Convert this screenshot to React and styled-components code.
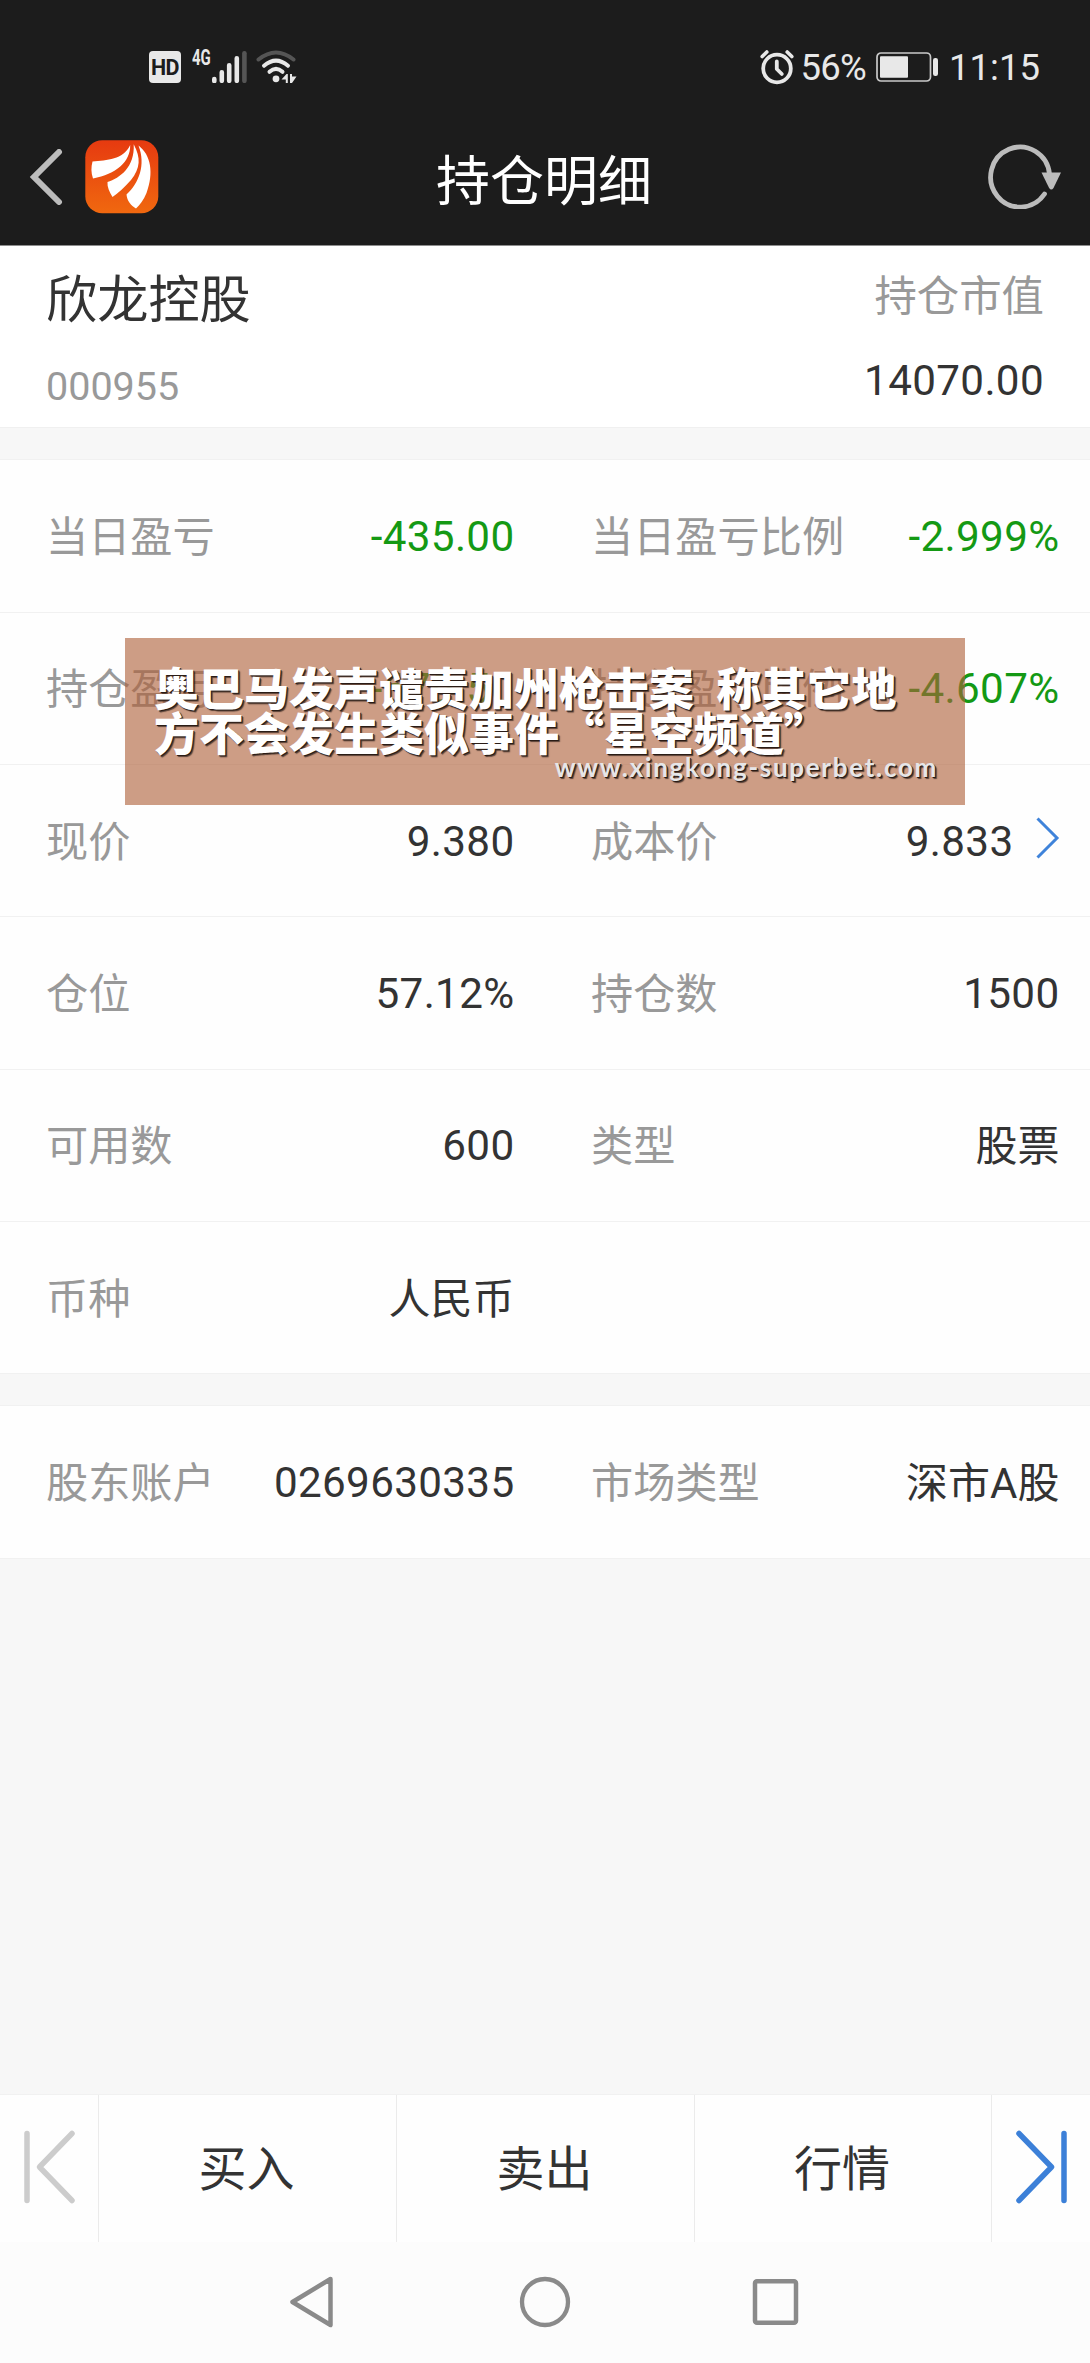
import React from "react";
import styled, { createGlobalStyle } from "styled-components";

const Global = createGlobalStyle`
  * { box-sizing: border-box; }
  body {
    margin: 0;
    background: #f7f7f7;
    font-family: Roboto, "Noto Sans CJK SC", sans-serif;
    font-weight: 400;
    color: #333;
  }
  svg { display: block; flex: none; }
`;

const Screen = styled.div`
  position: relative;
  width: 1090px;
  height: 2363px;
  display: flex;
  flex-direction: column;
  overflow: hidden;
  background: #f7f7f7;
`;

const Top = styled.header`
  height: 246px;
  background: #1c1c1c;
  border-bottom: 1px solid #8d8d8d;
  flex: none;
`;

const StatusBar = styled.div`
  height: 108px;
  padding: 26px 50px 0 149px;
  display: flex;
  align-items: center;
  justify-content: space-between;
`;

const StatusGroup = styled.div`
  display: flex;
  align-items: center;
  height: 82px;
`;

const HdBadge = styled.span`
  width: 32px;
  height: 32px;
  border-radius: 4px;
  background: #e8e8e8;
  color: #1c1c1c;
  font-size: 21.5px;
  font-weight: 700;
  line-height: 33px;
  text-align: center;
  letter-spacing: -0.5px;
`;

const NetType = styled.span`
  width: 20px;
  margin: 0 0 19px 11px;
  color: #e8e8e8;
  font-size: 22px;
  font-weight: 700;
  line-height: 16px;
  white-space: nowrap;
  transform: scaleX(0.68);
  transform-origin: left;
`;

const StatusText = styled.span`
  color: #e8e8e8;
  font-size: 36.5px;
  line-height: 40px;
  letter-spacing: ${(p) => p.$spacing || "0"};
  margin: 2px 0 0 ${(p) => p.$left};
`;

const StatusIcon = styled.span`
  margin-left: ${(p) => p.$left || "0"};
`;

const TitleBar = styled.div`
  height: 137px;
  display: grid;
  grid-template-columns: 200px 1fr 200px;
  align-items: center;
`;

const TitleLeft = styled.div`
  display: flex;
  align-items: center;
  gap: 22px;
  padding-left: 29px;
`;

const TitleRight = styled.div`
  display: flex;
  justify-content: flex-end;
  padding: 0 27px 4px 0;
`;

const Title = styled.h1`
  margin: 12px 0 0;
  padding-right: 2px;
  color: #fff;
  font-size: 54px;
  font-weight: 400;
  line-height: 70px;
  text-align: center;
`;

const Summary = styled.section`
  height: 182px;
  flex: none;
  display: flex;
  justify-content: space-between;
  padding: 20px 46px 0 46px;
  background: #fff;
  border-bottom: 1px solid #f0f0f0;
`;

const SummaryColumn = styled.div`
  display: flex;
  flex-direction: column;
  align-items: ${(p) => (p.$end ? "flex-end" : "flex-start")};
`;

const StockName = styled.div`
  font-size: 51.2px;
  line-height: 70px;
`;

const StockCode = styled.div`
  margin-top: 31px;
  color: #999;
  font-size: 39.5px;
  line-height: 40px;
`;

const MarketLabel = styled.div`
  color: #999;
  font-size: 42.4px;
  line-height: 62px;
`;

const MarketValue = styled.div`
  margin-top: 33px;
  font-size: 42.2px;
  line-height: 40px;
  letter-spacing: 0.35px;
`;

const Group = styled.section`
  flex: none;
  margin-top: ${(p) => p.$gap};
  background: #fefefe;
  border-top: 1px solid #f1f1f1;
  border-bottom: 1px solid #f1f1f1;
`;

const Row = styled.div`
  display: grid;
  grid-template-columns: 1fr 1fr;
  height: ${(p) => (p.$first ? "151.5px" : "152.4px")};
  border-top: ${(p) => (p.$first ? "0" : "1px solid #f1f1f1")};
`;

const Cell = styled.div`
  display: flex;
  align-items: center;
  padding: 2px 30.5px 0 46px;
`;

const Label = styled.span`
  flex: 1;
  padding-top: 2px;
  color: #999;
  font-size: 42.2px;
  line-height: 60px;
  white-space: nowrap;
`;

const Value = styled.span`
  padding-top: ${(p) => (p.$cjk ? "2px" : "0")};
  color: ${(p) => (p.$loss ? "#149914" : "#333")};
  font-size: ${(p) => (p.$cjk ? "42px" : "42.2px")};
  line-height: 60px;
  letter-spacing: ${(p) => (p.$cjk ? "0" : "0.35px")};
  white-space: nowrap;
`;

const RowArrow = styled.svg`
  margin: -8px 0 0 22px;
`;

const Banner = styled.aside`
  position: absolute;
  left: 125px;
  top: 638px;
  width: 840px;
  height: 167px;
  padding: 26px 27px 0 29px;
  background: rgba(174, 97, 58, 0.62);
`;

const BannerHeadline = styled.div`
  color: #fff;
  font-family: "Noto Sans CJK SC", sans-serif;
  font-size: 45px;
  font-weight: 900;
  line-height: 45px;
  white-space: pre;
  text-shadow: 1px 1px 0 #2a1c16, 2px 2px 1px rgba(40, 25, 20, 0.7);
`;

const BannerGap = styled.span`
  display: inline-block;
  width: 22.5px;
`;

const BannerUrl = styled.div`
  margin-top: -2px;
  color: #e6e6e8;
  font-family: Lato, sans-serif;
  font-size: 26px;
  font-weight: 700;
  line-height: 30px;
  letter-spacing: 1.7px;
  text-align: right;
  text-shadow: 1px 1px 0 #2a1c16, 2px 2px 1px rgba(40, 25, 20, 0.7);
`;

const Spacer = styled.div`
  flex: 1;
`;

const ActionBar = styled.nav`
  flex: none;
  height: 148px;
  display: grid;
  grid-template-columns: 98px 298px 298px 297px 99px;
  background: #fefefe;
  border-top: 1px solid #f1f1f1;
`;

const Action = styled.div`
  display: flex;
  align-items: center;
  justify-content: center;
  padding: ${(p) => (p.$icon ? "0 0 3px" : "2px 2px 0 0")};
  border-left: ${(p) => (p.$first ? "0" : "1px solid #ebebeb")};
  font-size: 48px;
  line-height: 60px;
`;

const SystemNav = styled.footer`
  flex: none;
  height: 121px;
  display: grid;
  grid-template-columns: 288px 231px 232px 1fr;
  align-items: center;
  padding-bottom: 2px;
  background: #fcfcfc;
`;

const groups = [
  {
    gap: "31px",
    rows: [
      [
        { label: "当日盈亏", value: "-435.00", loss: true },
        { label: "当日盈亏比例", value: "-2.999%", loss: true },
      ],
      [
        { label: "持仓盈亏", value: "-679.50", loss: true },
        { label: "持仓盈亏比例", value: "-4.607%", loss: true },
      ],
      [
        { label: "现价", value: "9.380" },
        { label: "成本价", value: "9.833", arrow: true },
      ],
      [
        { label: "仓位", value: "57.12%" },
        { label: "持仓数", value: "1500" },
      ],
      [
        { label: "可用数", value: "600" },
        { label: "类型", value: "股票", cjk: true },
      ],
      [{ label: "币种", value: "人民币", cjk: true }],
    ],
  },
  {
    gap: "31px",
    rows: [
      [
        { label: "股东账户", value: "0269630335" },
        { label: "市场类型", value: "深市A股", cjk: true },
      ],
    ],
  },
];

function Signal() {
  return (
    <svg width="36" height="32" viewBox="0 0 36 32" stroke="#e8e8e8" strokeWidth="4.6" strokeLinecap="round">
      <path d="M2.3 28v2M9.8 21.3v8.5M17.2 14.3v15.5M24.8 7.3v22.5" />
      <path d="M32.4 2.3v27.5" stroke="#555" />
    </svg>
  );
}

function Wifi() {
  return (
    <svg width="42" height="34" viewBox="0 0 42 34" fill="none" strokeWidth="4" strokeLinecap="round">
      <path d="M2.5 9.5Q20 -4.5 37.5 9.5" stroke="#555" />
      <path d="M8 15.8Q20 5.5 32 15.8M13.5 21.8Q20 15.8 26.5 21.8" stroke="#e8e8e8" />
      <circle cx="20" cy="28.8" r="3.4" fill="#e8e8e8" />
      <path d="M25.5 29.5l5-5.5h1.3v9h-2v-3.5zM34 24h2l0 2.500h4.500l-4.500 6.500h-2z" fill="#e8e8e8" />
    </svg>
  );
}

function Alarm() {
  return (
    <svg width="34" height="36" viewBox="0 0 34 36" fill="none" stroke="#e8e8e8" strokeLinecap="round">
      <circle cx="17" cy="19.5" r="13.8" strokeWidth="3.8" />
      <path d="M2.2 7.5L6.8 3M31.8 7.5L27.2 3" strokeWidth="3.6" />
      <path d="M16.8 12.5v7.5l5 5" strokeWidth="3.8" strokeLinejoin="round" />
    </svg>
  );
}

function Battery() {
  return (
    <svg width="63" height="30" viewBox="0 0 63 30">
      <rect x="1" y="1" width="53.5" height="28" rx="4" fill="none" stroke="#c9c9c9" strokeWidth="1.7" />
      <rect x="4" y="4.3" width="28" height="21.5" rx="1" fill="#e8e8e8" />
      <rect x="57" y="6" width="5" height="18" rx="2.2" fill="#e8e8e8" />
    </svg>
  );
}

function Logo() {
  return (
    <svg width="74" height="74" viewBox="0 0 74 74">
      <defs>
        <linearGradient id="logoFill" x1="0" y1="0" x2="0" y2="1">
          <stop offset="0" stopColor="#e63a10" />
          <stop offset="1" stopColor="#f0680f" />
        </linearGradient>
      </defs>
      <rect x="0.3" y="0.3" width="73" height="73" rx="17" fill="url(#logoFill)" />
      <g fill="#fff">
        <path d="M7.5 21.5C22 20 38 20 45.2 5C45.5 22 31 34 8 38.5C6 33 6 27 7.5 21.5Z" />
        <path d="M48.7 4.2C56 18 55.5 28 46 40C40 47 33 53 27.5 57C24.5 52 22 47 22.5 42C35 38 50 27 48.7 4.2Z" />
        <path d="M53.5 5.5C66 15 69 33 61.5 53C58.5 60 55 65 51 68.5C46 65.5 42 61 41.5 54.5C54 43 61 25 53.5 5.5Z" />
      </g>
    </svg>
  );
}

function Refresh() {
  return (
    <svg width="75" height="68" viewBox="0 0 75 68" fill="none">
      <path d="M61.5 33A29.5 30 0 1 0 56.5 53" stroke="#bcbcbc" strokeWidth="4.8" strokeLinecap="round" />
      <path d="M53.5 31.5h19.5l-7.500 15.500q-2.200 3-4.400 0z" fill="#bcbcbc" />
    </svg>
  );
}

function Field({ item }) {
  return (
    <Cell>
      <Label>{item.label}</Label>
      <Value $loss={item.loss} $cjk={item.cjk}>{item.value}</Value>
      {item.arrow && (
        <RowArrow width="24" height="42" viewBox="0 0 24 42" fill="none">
          <path d="M1.5 1.5L21 21L1.5 40.5" stroke="#3f83da" strokeWidth="3" />
        </RowArrow>
      )}
    </Cell>
  );
}

export default function App() {
  return (
    <Screen lang="zh-CN">
      <Global />
      <Top>
        <StatusBar>
          <StatusGroup>
            <HdBadge>HD</HdBadge>
            <NetType>4G</NetType>
            <Signal />
            <StatusIcon $left="8px"><Wifi /></StatusIcon>
          </StatusGroup>
          <StatusGroup>
            <StatusIcon><Alarm /></StatusIcon>
            <StatusText $left="6px" $spacing="-0.7px">56%</StatusText>
            <StatusIcon $left="10px"><Battery /></StatusIcon>
            <StatusText $left="10px">11:15</StatusText>
          </StatusGroup>
        </StatusBar>
        <TitleBar>
          <TitleLeft>
            <svg width="34" height="56" viewBox="0 0 34 56" fill="none">
              <path d="M30 3L5 28L30 53" stroke="#bcbcbc" strokeWidth="6" strokeLinecap="round" />
            </svg>
            <Logo />
          </TitleLeft>
          <Title>持仓明细</Title>
          <TitleRight>
            <Refresh />
          </TitleRight>
        </TitleBar>
      </Top>

      <Summary>
        <SummaryColumn>
          <StockName>欣龙控股</StockName>
          <StockCode>000955</StockCode>
        </SummaryColumn>
        <SummaryColumn $end>
          <MarketLabel>持仓市值</MarketLabel>
          <MarketValue>14070.00</MarketValue>
        </SummaryColumn>
      </Summary>

      {groups.map((group) => (
        <Group key={group.rows[0][0].label} $gap={group.gap}>
          {group.rows.map((row, i) => (
            <Row key={row[0].label} $first={i === 0}>
              {row.map((item) => (
                <Field key={item.label} item={item} />
              ))}
            </Row>
          ))}
        </Group>
      ))}

      <Spacer />

      <ActionBar>
        <Action $first $icon>
          <svg width="56" height="76" viewBox="0 0 56 76" fill="none" stroke="#ccc" strokeWidth="5.5" strokeLinecap="round" strokeLinejoin="round">
            <path d="M6 4.5v67M51 4.5L18.500 38L51 71.500" />
          </svg>
        </Action>
        <Action>买入</Action>
        <Action>卖出</Action>
        <Action>行情</Action>
        <Action $icon>
          <svg width="56" height="76" viewBox="0 0 56 76" fill="none" stroke="#3c80d8" strokeWidth="5.5" strokeLinecap="round" strokeLinejoin="round">
            <path d="M51 4.5v67M6 4.5L38.500 38L6 71.500" />
          </svg>
        </Action>
      </ActionBar>

      <SystemNav>
        <span />
        <svg width="46" height="54" viewBox="0 0 46 54" fill="none">
          <path d="M42.5 4L4.5 27L42.5 50Z" stroke="#8a8a8a" strokeWidth="4.5" strokeLinejoin="round" />
        </svg>
        <svg width="52" height="52" viewBox="0 0 52 52" fill="none">
          <circle cx="26" cy="26" r="23" stroke="#8a8a8a" strokeWidth="4.3" />
        </svg>
        <svg width="48" height="48" viewBox="0 0 48 48" fill="none">
          <rect x="4" y="3.3" width="41" height="41.4" rx="2" stroke="#8a8a8a" strokeWidth="4.5" />
        </svg>
      </SystemNav>

      <Banner>
        <BannerHeadline>奥巴马发声谴责加州枪击案<BannerGap />称其它地</BannerHeadline>
        <BannerHeadline>方不会发生类似事件“星空频道”</BannerHeadline>
        <BannerUrl>www.xingkong-superbet.com</BannerUrl>
      </Banner>
    </Screen>
  );
}
